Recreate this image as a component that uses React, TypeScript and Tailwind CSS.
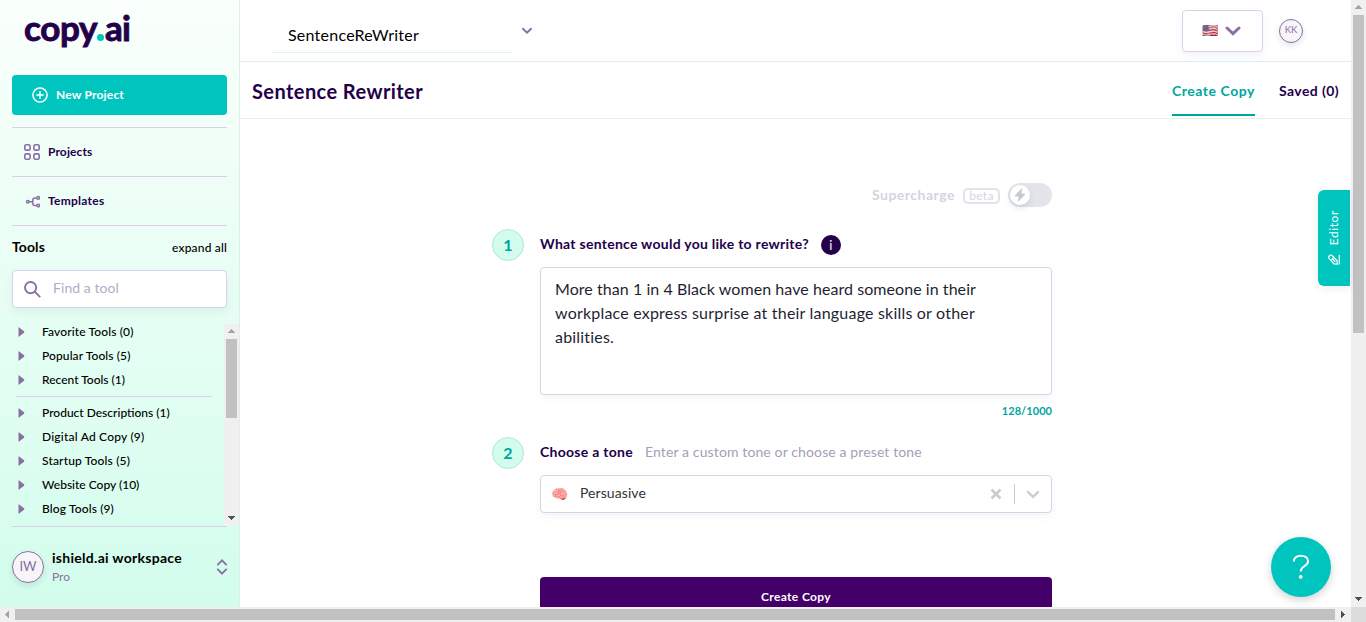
import React from "react";

type Tool = { name: string; tracking: string };

const pinnedTools: Tool[] = [
  { name: "Favorite Tools (0)", tracking: "tracking-[0.13px]" },
  { name: "Popular Tools (5)", tracking: "tracking-[0.1px]" },
  { name: "Recent Tools (1)", tracking: "tracking-normal" },
];

const categories: Tool[] = [
  { name: "Product Descriptions (1)", tracking: "tracking-normal" },
  { name: "Digital Ad Copy (9)", tracking: "tracking-[0.21px]" },
  { name: "Startup Tools (5)", tracking: "tracking-[0.16px]" },
  { name: "Website Copy (10)", tracking: "tracking-normal" },
  { name: "Blog Tools (9)", tracking: "tracking-[0.13px]" },
];

function Arrow({ d, className }: { d: string; className: string }) {
  return (
    <svg width="7" height="7" viewBox="0 0 7 7" className={className} fill="currentColor" shapeRendering="crispEdges">
      <path d={d} />
    </svg>
  );
}

const UP = "M3 1h1v1h1v1h1v1h1v1H0V4h1V3h1V2h1z";
const DOWN = "M0 1h7v1H6v1H5v1H4v1H3V4H2V3H1V2H0z";
const LEFT = "M4 0h1v7H4V6H3V5H2V4H1V3h1V2h1V1h1z";
const RIGHT = "M1 0h1v1h1v1h1v1h1v1H4v1H3v1H2v1H1z";

function ToolRow({ tool }: { tool: Tool }) {
  return (
    <li className="flex h-6 items-center pl-[18px] text-xs font-medium text-black">
      <svg width="7" height="10" viewBox="0 0 7 10" className="mr-[17px] text-[#8b6fa3]">
        <path d="M.5.8Q.5 0 1.2.4L6 4.3q.7.7 0 1.4L1.2 9.6q-.7.4-.7-.4z" fill="currentColor" />
      </svg>
      <span className={tool.tracking}>{tool.name}</span>
    </li>
  );
}

function Sidebar() {
  return (
    <aside className="flex w-60 shrink-0 flex-col border-r border-[#dcefe8] bg-linear-to-b from-[#fafffb] to-[#d2fdec]">
      <div className="flex h-[75px] items-start pl-6 pt-[7px] text-[35px] font-bold leading-[40px] text-[#24004b]">
        <span className="tracking-[-0.35px] [-webkit-text-stroke:0.9px_#24004b]">copy</span>
        <span className="mt-[27px] size-[7px] shrink-0 rounded-full bg-[#00c5bf]" />
        <span className="ml-px tracking-[-0.8px] [-webkit-text-stroke:0.9px_#24004b]">ai</span>
      </div>

      <div className="flex min-h-0 flex-1 flex-col">
        <button className="mx-3 flex h-10 shrink-0 items-center rounded bg-[#00c5bf] pl-5 text-xs font-bold text-white">
          <svg width="16" height="16" viewBox="0 0 16 16" fill="none" stroke="currentColor" strokeWidth="1.5" strokeLinecap="round" className="mr-2">
            <circle cx="8" cy="8" r="7.1" />
            <path d="M8 4.8v6.4M4.8 8h6.4" />
          </svg>
          <span className="tracking-[0.19px]">New Project</span>
        </button>

        <nav className="mx-3 mt-3 shrink-0 border-t border-[#dccfe9] text-xs font-bold text-[#24004b]">
          <a className="flex h-[49px] items-center border-b border-[#dccfe9] pl-3">
            <svg width="16" height="16" viewBox="0 0 16 16" fill="none" stroke="#8b6fa3" strokeWidth="1.6" className="mr-2">
              <rect x=".8" y=".8" width="5.3" height="5.3" rx="1.4" />
              <rect x="9.9" y=".8" width="5.3" height="5.3" rx="1.4" />
              <rect x=".8" y="9.9" width="5.3" height="5.3" rx="1.4" />
              <rect x="9.9" y="9.9" width="5.3" height="5.3" rx="1.4" />
            </svg>
            <span className="tracking-[0.12px]">Projects</span>
          </a>
          <a className="flex h-[49px] items-center border-b border-[#dccfe9] pl-3">
            <svg width="16" height="16" viewBox="0 0 16 16" fill="none" stroke="#8b6fa3" strokeWidth="1.5" className="mr-2">
              <circle cx="3.9" cy="8.7" r="1.3" />
              <circle cx="14.2" cy="4.9" r="1.3" />
              <circle cx="14.2" cy="12.5" r="1.3" />
              <path d="M5.3 8.7h3.4M12.8 4.9h-2q-2 0-2 2v3.6q0 2 2 2h2" />
            </svg>
            <span className="tracking-[0.26px]">Templates</span>
          </a>
        </nav>

        <div className="mx-3 flex h-11 shrink-0 items-center justify-between pb-0.5 text-black">
          <span className="text-sm font-bold tracking-[0.1px]">Tools</span>
          <span className="pt-px text-xs font-medium tracking-[0.17px]">expand all</span>
        </div>

        <div className="mx-3 flex h-[38px] shrink-0 items-center rounded border border-[#dccfe9] bg-white pl-[11px] shadow-[0_4px_8px_rgba(30,90,90,0.07)]">
          <svg width="17" height="17" viewBox="0 0 17 17" fill="none" stroke="#8b6fa3" strokeWidth="1.9" className="mr-3">
            <circle cx="6.6" cy="6.6" r="5.6" />
            <path d="M10.6 10.6l5.6 5.6" />
          </svg>
          <span className="pb-0.5 text-sm tracking-[0.07px] text-[#b9a9c8]">Find a tool</span>
        </div>

        <div className="mt-4 flex h-[202px] shrink-0">
          <div className="-mt-1 flex-1">
            <ul>
              {pinnedTools.map((t) => (
                <ToolRow key={t.name} tool={t} />
              ))}
            </ul>
            <ul className="mt-1 pt-1">
              <li className="-mt-1 mb-1 ml-4 mr-3 h-px bg-[#dccfe9]" />
              {categories.map((t) => (
                <ToolRow key={t.name} tool={t} />
              ))}
            </ul>
          </div>
          <div className="flex w-[15px] flex-col items-center bg-[#f0f0f0]">
            <div className="flex h-[15px] items-center">
              <Arrow d={UP} className="text-[#a3a3a3]" />
            </div>
            <div className="h-[79px] w-[11px] bg-[#c1c1c1]" />
            <Arrow d={DOWN} className="mb-[4px] mt-auto text-[#505050]" />
          </div>
        </div>

        <div className="mx-3 h-px shrink-0 bg-[#dccfe9]" />
        <div className="ml-3 mr-[11px] flex flex-1 items-center">
          <div className="flex size-8 items-center justify-center rounded-full border border-[#8b6fa3] bg-[#f7f5f8] text-[13px] text-[#8b6fa3] shadow-[0_3px_6px_rgba(30,60,90,0.12)]">
            IW
          </div>
          <div className="ml-2 flex-1">
            <div className="text-sm font-bold leading-[18px] tracking-[0.28px] text-black">ishield.ai workspace</div>
            <div className="-mb-px pt-px text-xs leading-[18px] text-[#8b6fa3]">Pro</div>
          </div>
          <svg width="12" height="16" viewBox="0 0 12 16" fill="none" stroke="#8b6fa3" strokeWidth="1.9" strokeLinecap="round">
            <path d="M1.8 5.6L6 1.4l4.2 4.200M1.800 10.400L6 14.600l4.200-4.200" />
          </svg>
        </div>
      </div>
    </aside>
  );
}

function Header() {
  return (
    <header className="flex h-[62px] shrink-0 items-start border-b border-[#dfefeb]">
      <div className="ml-8 mt-[18px] h-[35px] w-60 border-b border-[#dcf5e4] pl-4 text-base leading-[33px] tracking-[0.24px] text-black">
        SentenceReWriter
      </div>
      <svg width="12" height="8" viewBox="0 0 12 8" fill="none" stroke="#8b6fa3" strokeWidth="2" className="ml-[9px] mt-[27px]">
        <path d="M1.4 1.2L6 5.6l4.6-4.4" />
      </svg>
      <div className="ml-auto mt-[10px] flex h-[42px] w-[81px] items-center rounded border border-[#dccfe9] pl-[19px] shadow-[0_4px_8px_rgba(30,90,90,0.06)]">
        <span className="w-[16px] pb-px font-['Noto_Color_Emoji'] text-[13px] leading-none">🇺🇸</span>
        <svg width="16" height="10" viewBox="0 0 16 10" fill="none" stroke="#8b6fa3" strokeWidth="3" strokeLinecap="round" className="ml-[7px]">
          <path d="M2 2l6 5.600L14 2" />
        </svg>
      </div>
      <div className="ml-4 mr-12 mt-[19px] flex size-6 items-center justify-center rounded-full border border-[#8b6fa3] bg-[#f7f5f8] pb-px text-[9.5px] text-[#8b6fa3] shadow-[0_3px_6px_rgba(30,60,90,0.12)]">
        KK
      </div>
    </header>
  );
}

function StepBadge({ n }: { n: number }) {
  return (
    <div className="mr-4 flex size-8 shrink-0 items-center justify-center rounded-full border border-[#aee9df] bg-[#d2fdec] pb-px text-base font-bold text-[#00a59f]">
      {n}
    </div>
  );
}

function Form() {
  return (
    <section className="ml-[252px] mt-[64px] flex w-[560px] flex-col">
      <div className="flex h-6 items-center justify-end text-[#d3d5df]">
        <span className="text-sm font-bold tracking-[0.5px]">Supercharge</span>
        <span className="ml-2 mt-px flex h-4 w-[37px] items-center justify-center rounded-[5px] border-2 border-[#e2e2ea] text-xs leading-none tracking-[0.3px]">
          beta
        </span>
        <div className="ml-2 flex h-6 w-11 items-center rounded-full bg-[#e4e4eb] pl-[2px]">
          <div className="flex size-5 items-center justify-center rounded-full bg-white shadow-[0_3px_6px_rgba(30,90,90,0.15)]">
            <svg width="12" height="14" viewBox="0 0 12 14" fill="#c9c9cd">
              <path d="M7.8.3L.8 7.6q-.3.5.3.6l3.6.5-1 4.9q0 .5.5.2l7-7.4q.3-.5-.3-.6L7.4 5.300 8.300.6q0-.5-.5-.3z" />
            </svg>
          </div>
        </div>
      </div>

      <div className="mt-[22px] flex h-8 items-center">
        <StepBadge n={1} />
        <span className="pb-0.5 text-sm font-bold tracking-[0.27px] text-[#24004b]">What sentence would you like to rewrite?</span>
        <span className="ml-3 flex size-5 items-center justify-center rounded-full bg-[#24004b] text-[13px] leading-none text-white">
          i
        </span>
      </div>
      <div className="ml-12 mt-[6px] h-32 rounded border border-[#dccfe9] bg-white px-[14px] pt-[9px] text-base leading-6 text-[#1f1f33] shadow-[0_4px_8px_rgba(30,90,90,0.05)]">
        <div className="whitespace-nowrap tracking-[0.06px]">More than 1 in 4 Black women have heard someone in their</div>
        <div className="whitespace-nowrap tracking-[0.2px]">workplace express surprise at their language skills or other</div>
        <div className="tracking-[0.2px]">abilities.</div>
      </div>
      <div className="mt-[7px] flex h-[18px] items-center justify-end text-[11px] font-bold tracking-[0.05px] text-[#00a59f]">128/1000</div>

      <div className="mt-[17px] flex h-8 items-center">
        <StepBadge n={2} />
        <span className="pb-0.5 text-sm font-bold tracking-[0.28px] text-[#24004b]">Choose a tone</span>
        <span className="ml-3 pb-0.5 text-sm tracking-[0.12px] text-[#a0a2b8]">Enter a custom tone or choose a preset tone</span>
      </div>
      <div className="ml-12 mt-[6px] flex h-[38px] items-center rounded border border-[#dccfe9] bg-white pl-[10px] shadow-[0_4px_8px_rgba(30,90,90,0.05)]">
        <span className="w-[17px] font-['Noto_Color_Emoji'] text-[14px] leading-none">🧠</span>
        <span className="ml-3 pb-0.5 text-sm tracking-[0.08px] text-[#333]">Persuasive</span>
        <svg width="12" height="12" viewBox="0 0 12 12" fill="none" stroke="#ccc" strokeWidth="2.600" className="ml-auto">
          <path d="M1.500 1.500l9 9M10.500 1.500l-9 9" />
        </svg>
        <div className="ml-3 h-5 w-px bg-[#ccc]" />
        <svg width="14" height="9" viewBox="0 0 14 9" fill="none" stroke="#ccc" strokeWidth="2.400" strokeLinecap="round" className="ml-[11px] mr-[11px]">
          <path d="M2 2l5 4.800L12 2" />
        </svg>
      </div>
      <button className="ml-12 mt-16 flex h-10 items-center justify-center rounded bg-[#430068] text-xs font-bold tracking-[0.36px] text-white">
        Create Copy
      </button>
    </section>
  );
}

export default function App() {
  return (
    <div className="relative flex h-[622px] w-[1366px] flex-col overflow-hidden bg-white font-['Lato',sans-serif]">
      <div className="flex h-[607px] shrink-0">
        <Sidebar />
        <main className="flex h-[607px] min-w-0 flex-1 flex-col overflow-hidden">
          <Header />
          <div className="flex h-[57px] shrink-0 border-b border-[#dcf5e4] pl-3 pr-3 text-[#24004b]">
            <h1 className="text-xl font-bold leading-[58px] tracking-[0.42px]">Sentence Rewriter</h1>
            <div className="ml-auto flex h-[54px] text-sm font-bold leading-[58px]">
              <span className="border-b-2 border-[#00a59f] tracking-[0.54px] text-[#00a59f]">Create Copy</span>
              <span className="ml-6 tracking-[0.41px]">Saved (0)</span>
            </div>
          </div>
          <Form />
        </main>
        <div className="flex w-[15px] shrink-0 flex-col items-center bg-[#f0f0f0]">
          <div className="flex h-[15px] items-center">
            <Arrow d={UP} className="text-[#a3a3a3]" />
          </div>
          <div className="h-[318px] w-[11px] bg-[#c1c1c1]" />
          <Arrow d={DOWN} className="mb-[4px] mt-auto text-[#505050]" />
        </div>
      </div>
      <div className="flex h-[15px] items-center bg-[#f0f0f0]">
        <div className="flex w-[15px] justify-center">
          <Arrow d={LEFT} className="text-[#a3a3a3]" />
        </div>
        <div className="h-[11px] w-[1320px] bg-[#c1c1c1]" />
        <div className="flex w-4 justify-center">
          <Arrow d={RIGHT} className="text-[#505050]" />
        </div>
        <div className="size-[15px] bg-[#dcdcdc]" />
      </div>

      <div className="absolute right-4 top-[190px] flex h-24 w-8 flex-col items-center rounded-l-md bg-[#00c5bf] pt-5 text-white shadow-[0_2px_8px_rgba(0,0,0,0.08)]">
        <span className="rotate-180 text-xs leading-4 tracking-[0.6px] [writing-mode:vertical-rl]">Editor</span>
        <svg width="12" height="12" viewBox="0 0 12 12" fill="none" stroke="currentColor" strokeWidth="1.200" className="mt-[9px]">
          <path d="M11.300 1v9.600M1.300 2q1.300-1.600 3-.2l4.800 5 .2 3.300-3.200-.3-4.800-5Q.2 3.200 1.300 2zM3 6.400l2.800-3M4.300 4.900l3 3" />
        </svg>
      </div>
      <div className="absolute left-[1271px] top-[537px] flex size-[60px] items-center justify-center rounded-full bg-[#00c5bf] shadow-[0_3px_8px_rgba(0,0,0,0.18)]">
        <svg width="18" height="26" viewBox="0 0 18 26" fill="none" stroke="#fff" strokeWidth="2">
          <path d="M1.800 7.500C1.800 3.700 4.800 1.700 8.800 1.700s7.300 2 7.300 5.600c0 5-7.400 4.500-7.400 10.200" />
          <circle cx="8.700" cy="22.800" r="1.900" fill="#fff" stroke="none" />
        </svg>
      </div>
    </div>
  );
}
